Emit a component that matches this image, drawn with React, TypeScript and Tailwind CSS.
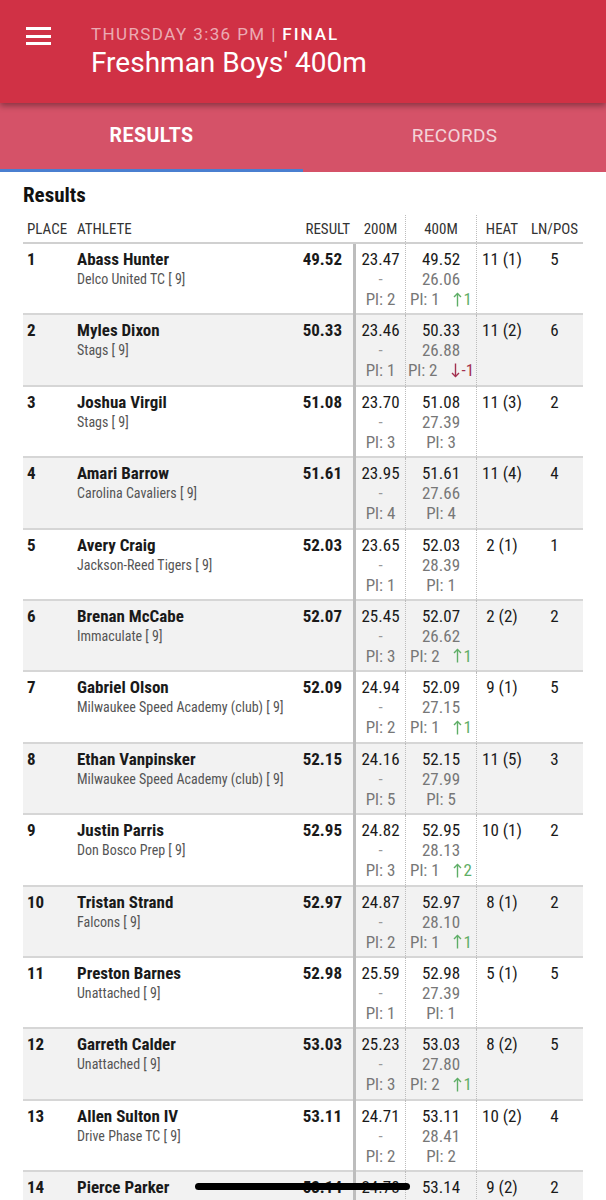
type Row = {
  place: number;
  name: string;
  team: string;
  result: string;
  s200: string;
  pl200: string;
  s400: string;
  split: string;
  pl400: string;
  move?: number;
  heat: string;
  lane: string;
};

const rows: Row[] = [
  { place: 1, name: "Abass Hunter", team: "Delco United TC [ 9]", result: "49.52", s200: "23.47", pl200: "2", s400: "49.52", split: "26.06", pl400: "1", move: 1, heat: "11 (1)", lane: "5" },
  { place: 2, name: "Myles Dixon", team: "Stags [ 9]", result: "50.33", s200: "23.46", pl200: "1", s400: "50.33", split: "26.88", pl400: "2", move: -1, heat: "11 (2)", lane: "6" },
  { place: 3, name: "Joshua Virgil", team: "Stags [ 9]", result: "51.08", s200: "23.70", pl200: "3", s400: "51.08", split: "27.39", pl400: "3", heat: "11 (3)", lane: "2" },
  { place: 4, name: "Amari Barrow", team: "Carolina Cavaliers [ 9]", result: "51.61", s200: "23.95", pl200: "4", s400: "51.61", split: "27.66", pl400: "4", heat: "11 (4)", lane: "4" },
  { place: 5, name: "Avery Craig", team: "Jackson-Reed Tigers [ 9]", result: "52.03", s200: "23.65", pl200: "1", s400: "52.03", split: "28.39", pl400: "1", heat: "2 (1)", lane: "1" },
  { place: 6, name: "Brenan McCabe", team: "Immaculate [ 9]", result: "52.07", s200: "25.45", pl200: "3", s400: "52.07", split: "26.62", pl400: "2", move: 1, heat: "2 (2)", lane: "2" },
  { place: 7, name: "Gabriel Olson", team: "Milwaukee Speed Academy (club) [ 9]", result: "52.09", s200: "24.94", pl200: "2", s400: "52.09", split: "27.15", pl400: "1", move: 1, heat: "9 (1)", lane: "5" },
  { place: 8, name: "Ethan Vanpinsker", team: "Milwaukee Speed Academy (club) [ 9]", result: "52.15", s200: "24.16", pl200: "5", s400: "52.15", split: "27.99", pl400: "5", heat: "11 (5)", lane: "3" },
  { place: 9, name: "Justin Parris", team: "Don Bosco Prep [ 9]", result: "52.95", s200: "24.82", pl200: "3", s400: "52.95", split: "28.13", pl400: "1", move: 2, heat: "10 (1)", lane: "2" },
  { place: 10, name: "Tristan Strand", team: "Falcons [ 9]", result: "52.97", s200: "24.87", pl200: "2", s400: "52.97", split: "28.10", pl400: "1", move: 1, heat: "8 (1)", lane: "2" },
  { place: 11, name: "Preston Barnes", team: "Unattached [ 9]", result: "52.98", s200: "25.59", pl200: "1", s400: "52.98", split: "27.39", pl400: "1", heat: "5 (1)", lane: "5" },
  { place: 12, name: "Garreth Calder", team: "Unattached [ 9]", result: "53.03", s200: "25.23", pl200: "3", s400: "53.03", split: "27.80", pl400: "2", move: 1, heat: "8 (2)", lane: "5" },
  { place: 13, name: "Allen Sulton IV", team: "Drive Phase TC [ 9]", result: "53.11", s200: "24.71", pl200: "2", s400: "53.11", split: "28.41", pl400: "2", heat: "10 (2)", lane: "4" },
  { place: 14, name: "Pierce Parker", team: "Unattached [ 9]", result: "53.14", s200: "24.78", pl200: "2", s400: "53.14", split: "28.36", pl400: "2", heat: "9 (2)", lane: "2" },
];

function UpArrow() {
  return (
    <svg width="9" height="15" viewBox="0 0 9 15" fill="none" stroke="currentColor" strokeWidth="1.4">
      <path d="M4.5 14.5V1.5" />
      <path d="M1 5L4.5 1.5L8 5" />
    </svg>
  );
}

function DownArrow() {
  return (
    <svg width="9" height="15" viewBox="0 0 9 15" fill="none" stroke="currentColor" strokeWidth="1.4">
      <path d="M4.5 0.5V13.5" />
      <path d="M1 10L4.5 13.5L8 10" />
    </svg>
  );
}

const cols = "grid grid-cols-[49px_221px_60px_52px_71px_51px_55px]";

export default function App() {
  return (
    <div className="relative h-[1200px] w-[606px] overflow-hidden bg-white font-['Roboto',sans-serif]">
      {/* App bar */}
      <div className="relative z-10 flex h-[103px] bg-[#d03145] shadow-[0_3px_6px_rgba(0,0,0,0.35)]">
        <div className="flex w-[91px] flex-col gap-[4.5px] pl-[26px] pt-[27px]">
          <span className="block h-[3px] w-[25px] bg-white" />
          <span className="block h-[3px] w-[25px] bg-white" />
          <span className="block h-[3px] w-[25px] bg-white" />
        </div>
        <div className="flex flex-col pt-[24px]">
          <div className="text-[17px] leading-[21px] tracking-[1.4px] text-white/60">
            THURSDAY 3:36 PM | <span className="font-medium tracking-[2px] text-white">FINAL</span>
          </div>
          <div className="mt-[1px] text-[28px] leading-[34px] text-white">Freshman Boys' 400m</div>
        </div>
      </div>

      {/* Tabs */}
      <div className="relative flex h-[69px] bg-[#d55268]">
        <div className="flex flex-1 items-center justify-center pb-[3px] text-[19.5px] font-bold tracking-[0.5px] text-white">
          RESULTS
        </div>
        <div className="flex flex-1 items-center justify-center pb-[3px] text-[19px] tracking-[0.3px] text-white/75">
          RECORDS
        </div>
        <div className="absolute bottom-0 left-0 h-[3px] w-[303px] bg-[#4a7fd0]" />
      </div>

      {/* Content */}
      <div className="px-[23px] font-stretch-condensed">
        <div className="mt-[11px] text-[21px] font-bold leading-[24px] text-[#111]">Results</div>

        {/* header row */}
        <div className={`${cols} mt-[8px] border-b-2 border-[#d0d0d0] text-[15px] leading-[20px] text-[#333]`}>
          <div className="pl-[4px] pt-[4px] pb-[3px]">PLACE</div>
          <div className="pl-[5px] pt-[4px] pb-[3px]">ATHLETE</div>
          <div className="pr-[3px] pt-[4px] pb-[3px] text-right">RESULT</div>
          <div className="border-l-[3px] border-transparent pt-[4px] pb-[3px] text-center">200M</div>
          <div className="border-l border-dotted border-[#bcbcbc] pt-[4px] pb-[3px] text-center">400M</div>
          <div className="border-l border-dotted border-[#bcbcbc] pt-[4px] pb-[3px] text-center">HEAT</div>
          <div className="pt-[4px] pb-[3px] text-center">LN/POS</div>
        </div>

        {rows.map((r, i) => (
          <div
            key={r.place}
            className={`${cols} h-[71.4px] border-b-2 border-[#d6d6d6] text-[17px] leading-[20px] text-[#1a1a1a] ${
              i % 2 === 1 ? "bg-[#f2f2f2]" : "bg-white"
            }`}
          >
            <div className="pl-[4px] pt-[5px] font-bold">{r.place}</div>
            <div className="pl-[5px] pt-[5px]">
              <div className="font-bold">{r.name}</div>
              <div className="text-[14px] text-[#555]">{r.team}</div>
            </div>
            <div className="pr-[11px] pt-[5px] text-right font-bold">{r.result}</div>
            <div className="-mb-[2px] flex flex-col items-center border-l-[3px] border-[#bdbdbd] pt-[5px]">
              <div>{r.s200}</div>
              <div className="text-[#999]">-</div>
              <div className="text-[#777]">Pl: {r.pl200}</div>
            </div>
            <div className="-mb-[2px] flex flex-col items-center border-l border-dotted border-[#bcbcbc] pt-[5px]">
              <div>{r.s400}</div>
              <div className="text-[#777]">{r.split}</div>
              <div className="flex items-center gap-[13px] text-[#777]">
                <span>Pl: {r.pl400}</span>
                {r.move !== undefined && r.move > 0 && (
                  <span className="flex items-center gap-[2px] text-[#5eae66]">
                    <UpArrow />
                    {r.move}
                  </span>
                )}
                {r.move !== undefined && r.move < 0 && (
                  <span className="flex items-center gap-[2px] text-[#a3304f]">
                    <DownArrow />
                    {r.move}
                  </span>
                )}
              </div>
            </div>
            <div className="-mb-[2px] border-l border-dotted border-[#bcbcbc] pt-[5px] text-center">{r.heat}</div>
            <div className="pt-[5px] text-center">{r.lane}</div>
          </div>
        ))}
      </div>

      {/* home indicator */}
      <div className="absolute left-[195px] top-[1183px] h-[7px] w-[215px] rounded-full bg-black" />
    </div>
  );
}
